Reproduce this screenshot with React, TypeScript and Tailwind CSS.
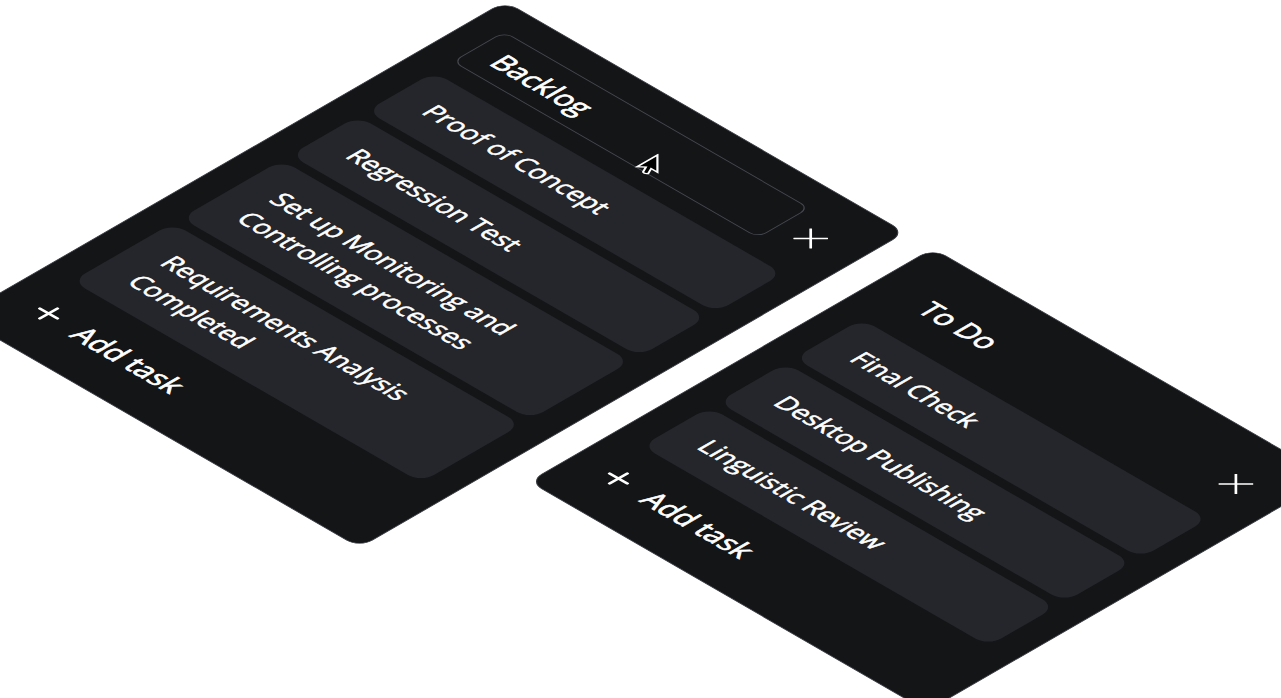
import { useState } from "react";

type ColumnData = { title: string; tasks: string[]; editing?: boolean };

const columns: ColumnData[] = [
  {
    title: "Backlog",
    editing: true,
    tasks: [
      "Proof of Concept",
      "Regression Test",
      "Set up Monitoring and Controlling processes",
      "Requirements Analysis Completed",
    ],
  },
  { title: "To Do", tasks: ["Final Check", "Desktop Publishing", "Linguistic Review"] },
];

function CloseIcon() {
  return (
    <svg width="22" height="22" viewBox="0 0 22 22" fill="none" stroke="currentColor" strokeWidth="2.2" aria-hidden="true">
      <path d="M1 1 21 21M21 1 1 21" />
    </svg>
  );
}

function PlusIcon() {
  return (
    <svg width="24" height="24" viewBox="0 0 24 24" fill="none" stroke="currentColor" strokeWidth="3" strokeLinecap="round" aria-hidden="true">
      <path d="M12 1.8V22.2M1.8 12H22.2" />
    </svg>
  );
}

function Pointer() {
  return (
    <svg className="absolute left-[239px] top-[63px]" width="24" height="32" viewBox="0 0 24 32" aria-hidden="true">
      <path
        d="M2 2V25.5L7.4 20.6L10.8 27.4Q13.2 28.6 15.2 25.8L12 19.2H19.2Z"
        fill="#000"
        stroke="#fff"
        strokeWidth="1.8"
      />
    </svg>
  );
}

function Column({ column }: { column: ColumnData }) {
  const [title, setTitle] = useState(column.title);
  return (
    <section
      aria-label={column.title}
      className={
        column.editing
          ? "relative w-[463px] shrink-0 rounded-[15px] border border-[#373a40] bg-[#141517] px-[29px] pt-[30px] pb-[29px] text-white"
          : "relative w-[460px] shrink-0 rounded-[15px] border border-[#373a40] bg-[#141517] px-[29px] pt-[30px] pb-[29px] text-white"
      }
    >
      <header className="mb-[21px] flex items-center gap-3">
        <input
          aria-label="Column title"
          value={title}
          onChange={(e) => setTitle(e.target.value)}
          className={
            column.editing
              ? "h-[60px] min-w-0 flex-1 rounded-[10px] border border-[#464850] bg-transparent px-[22px] text-[29px] outline-none [-webkit-text-stroke:0.8px_#fff]"
              : "h-[60px] min-w-0 flex-1 rounded-[10px] border border-transparent bg-transparent px-[22px] text-[29px] outline-none [-webkit-text-stroke:0.8px_#fff]"
          }
        />
        <button type="button" aria-label="Delete column" className="flex h-10 w-[38px] items-center justify-center">
          <CloseIcon />
        </button>
      </header>
      <ul className="flex flex-col gap-2.5 [-webkit-text-stroke:0.6px_#fff]">
        {column.tasks.map((task) => (
          <li key={task} className="rounded-[15px] bg-[#25262b] px-[33px] py-5 text-[26px] leading-[38px]">
            {task}
          </li>
        ))}
      </ul>
      <button
        type="button"
        className="mt-[21px] flex h-[50px] items-center gap-[22px] px-[7px] text-[29px] [-webkit-text-stroke:0.8px_#fff]"
      >
        <PlusIcon />
        Add task
      </button>
      {column.editing && <Pointer />}
    </section>
  );
}

export default function App() {
  return (
    <main className="h-screen overflow-hidden bg-white font-['Open_Sans',sans-serif]">
      <div className="flex w-max origin-top-left items-start gap-[31px] [transform:matrix(0.866,0.5,-0.866,0.5,505,1)]">
        {columns.map((column) => (
          <Column key={column.title} column={column} />
        ))}
      </div>
    </main>
  );
}
